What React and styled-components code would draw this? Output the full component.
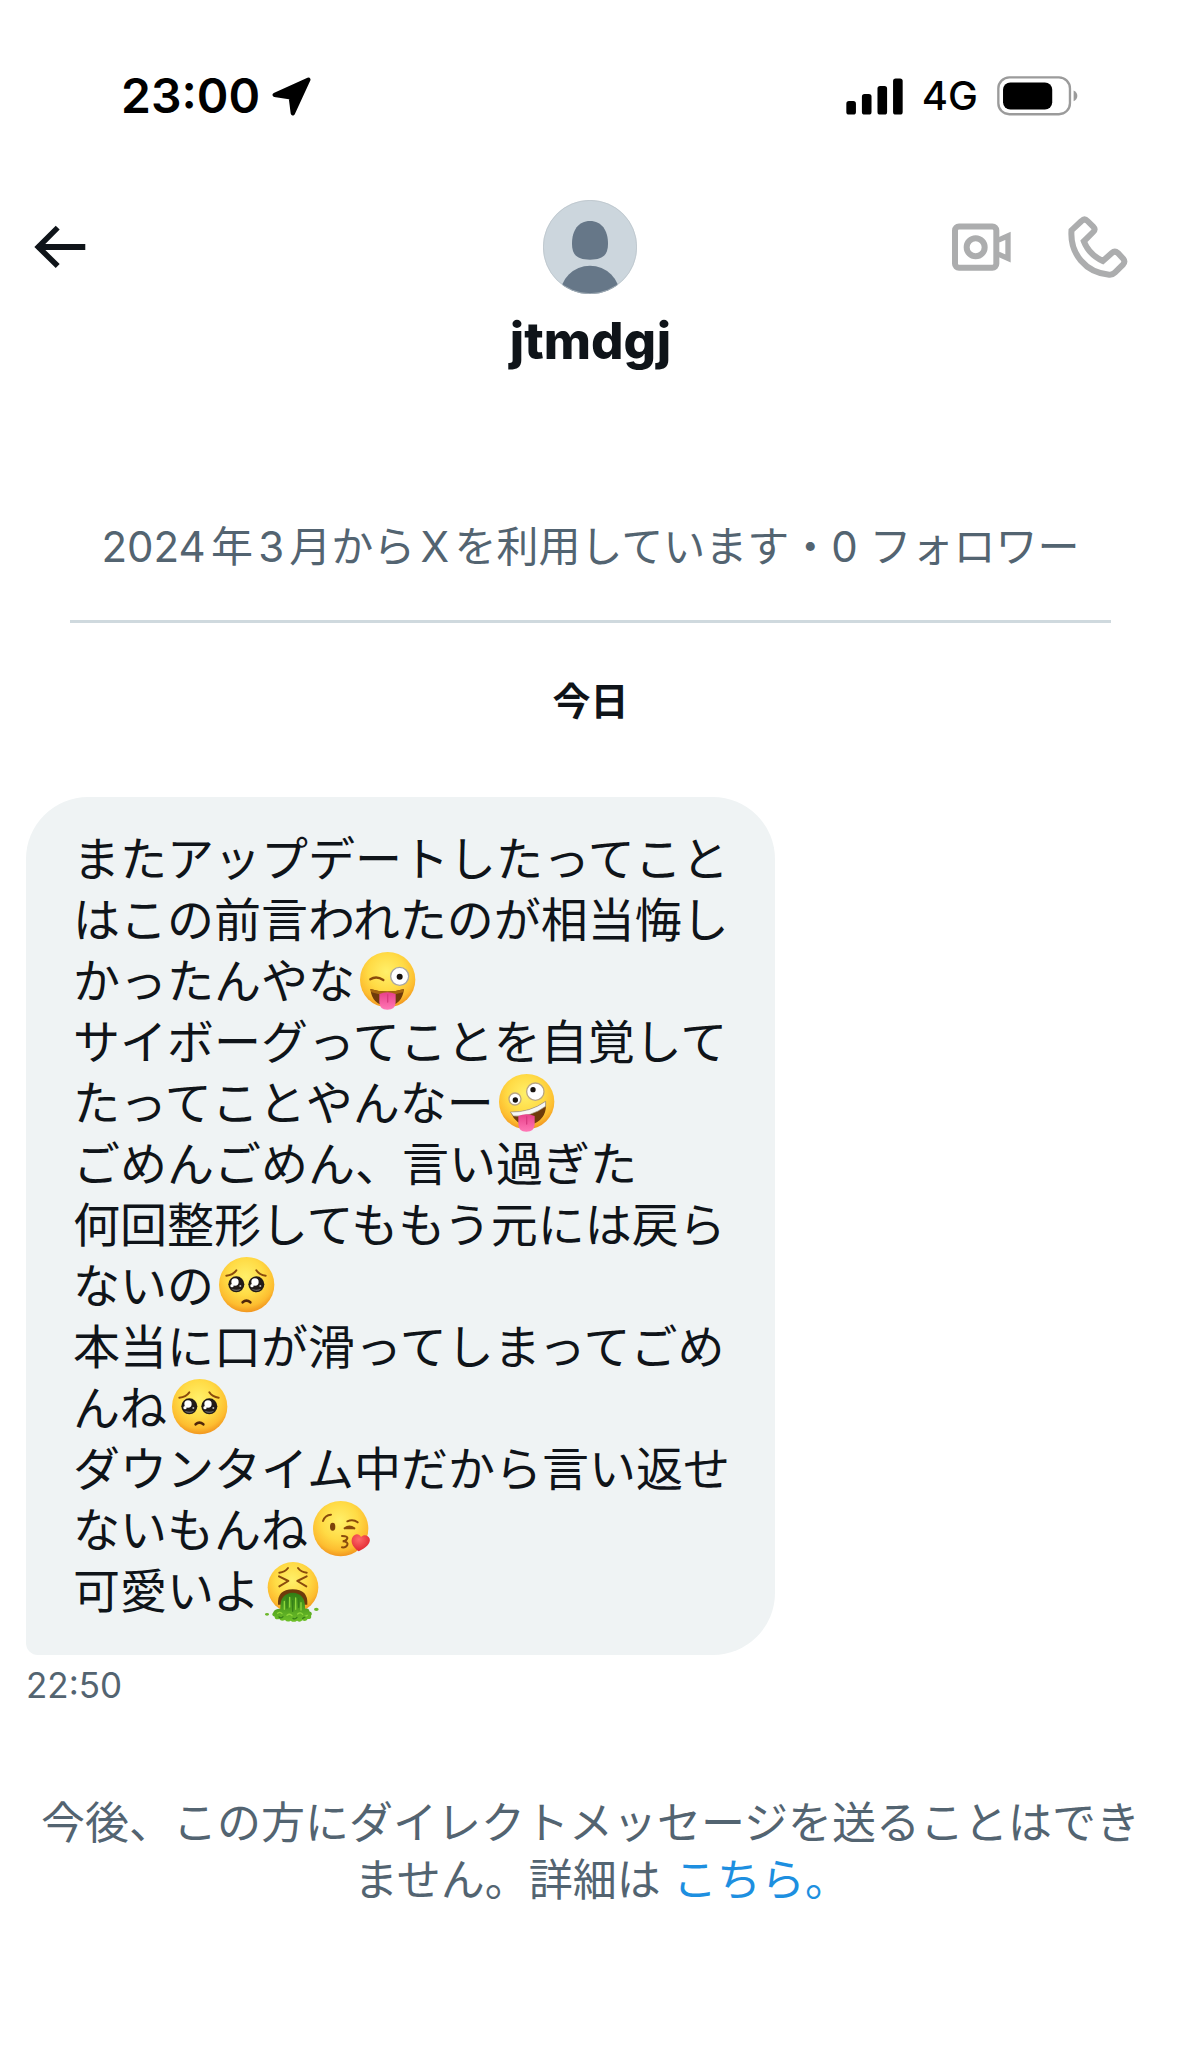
import React from 'react';
import styled, { createGlobalStyle } from 'styled-components';

const GlobalStyle = createGlobalStyle`
    * {
        box-sizing: border-box;
    }

    body {
        margin: 0;
        background-color: #FFF;
        color: #0f1419;
        font-family: Inter, "Noto Sans CJK JP", sans-serif;
    }
`;

const Screen = styled.div`
    display: flex;
    flex-direction: column;
    padding-bottom: 120px;
`;

const StatusBar = styled.div`
    display: flex;
    justify-content: space-between;
    align-items: center;
    padding: 66px 103px 0 121px;
    color: #000;
`;

const StatusGroup = styled.div`
    display: flex;
    align-items: center;
    gap: ${props => props.$gap}px;
`;

const Clock = styled.time`
    font-size: 48px;
    font-weight: 600;
    line-height: 60px;
`;

const Network = styled.span`
    font-size: 40px;
    font-weight: 500;
    line-height: 60px;
`;

const StyledHeader = styled.header`
    display: grid;
    grid-template-columns: 1fr auto 1fr;
    padding: 74px 34px 0;
`;

const HeaderSide = styled.div`
    display: flex;
    align-items: center;
    gap: 57px;
    height: 94px;
`;

const HeaderActions = styled(HeaderSide)`
    justify-content: flex-end;
    padding-right: 19px;
`;

const IconButton = styled.button`
    display: flex;
    padding: 0;
    border: 0;
    background: none;
    color: ${props => props.$muted ? '#acadae' : '#0f1419'};
`;

const Profile = styled.div`
    display: flex;
    flex-direction: column;
    align-items: center;
    gap: 17px;
`;

const Name = styled.h1`
    margin: 0;
    font-size: 51px;
    font-weight: 800;
    line-height: 60px;
`;

const AccountInfo = styled.p`
    margin: 146px 70px 0;
    padding-bottom: 43px;
    border-bottom: 3px solid #cfd9de;
    color: #536471;
    font-size: 42px;
    line-height: 60px;
    text-align: center;
    text-autospace: normal;
`;

const DayLabel = styled.h2`
    margin: 48px 0 66px;
    font-size: 38px;
    font-weight: 700;
    line-height: 60px;
    text-align: center;
`;

const Conversation = styled.main`
    display: flex;
    flex-direction: column;
    align-items: flex-start;
    padding: 0 26px;
`;

const Bubble = styled.p`
    max-width: calc(14em + 91px);
    margin: 0;
    padding: 31px 44px 34px 47px;
    border-radius: 62px 62px 62px 12px;
    background-color: #eff3f4;
    font-size: 47px;
    line-height: 61px;
    white-space: pre-line;
`;

const SentAt = styled.time`
    margin-top: 10px;
    color: #536471;
    font-size: 35px;
    line-height: 40px;
`;

const Notice = styled.footer`
    margin-top: 90px;
    padding: 0 36px;
    color: #536471;
    font-size: 44px;
    line-height: 57px;
    text-align: center;
`;

// the blank half of the closing 。 hangs outside the centred line
const NoticeLink = styled.a`
    display: inline-block;
    margin-right: -0.5em;
    color: #1d8fe0;
    text-decoration: none;
`;

const StyledEmoji = styled.svg`
    width: 58px;
    height: 60px;
    margin: -8px 0 -2px 5px;
    vertical-align: middle;
`;

const StyledDefs = styled.svg`
    position: absolute;
    width: 0;
    height: 0;
`;

const Emoji = ({ label, r = 83, cx = 83, cy = 83, children }) => (
    <StyledEmoji viewBox="0 0 174 180" role="img" aria-label={label}>
        <circle cx={cx} cy={cy} r={r} fill="url(#face)" />
        {children}
    </StyledEmoji>
);

// gradients shared by all the faces
const EmojiDefs = () => (
    <StyledDefs aria-hidden="true">
        <defs>
            <radialGradient id="face" cx="0.48" cy="0.36" r="0.66">
                <stop offset="0" stopColor="#fff06a" />
                <stop offset="0.5" stopColor="#ffdb45" />
                <stop offset="0.8" stopColor="#fdbd30" />
                <stop offset="1" stopColor="#ef8f1c" />
            </radialGradient>
            <linearGradient id="tongue" x1="0" y1="0" x2="0" y2="1">
                <stop offset="0" stopColor="#e8408a" />
                <stop offset="1" stopColor="#ff78b6" />
            </linearGradient>
            <linearGradient id="vomit" x1="0" y1="0" x2="0" y2="1">
                <stop offset="0" stopColor="#2f7d14" />
                <stop offset="1" stopColor="#6fc12a" />
            </linearGradient>
            <radialGradient id="heart" cx="0.4" cy="0.3" r="0.7">
                <stop offset="0" stopColor="#ff6a6a" />
                <stop offset="1" stopColor="#e0252f" />
            </radialGradient>
        </defs>
    </StyledDefs>
);

const Tongue = () => (
    <g>
        <path d="M58 126 Q82 116 107 126 V150 Q107 173 82 173 Q58 173 58 150 Z" fill="url(#tongue)" />
        <path d="M83 128 V150" stroke="#d93a80" strokeWidth="4" strokeLinecap="round" />
    </g>
);

const WinkTongue = () => (
    <Emoji label="😜">
        <path d="M31 82 Q49 70 70 84" fill="none" stroke="#8a4b0c" strokeWidth="7" strokeLinecap="round" />
        <circle cx="119" cy="73" r="27" fill="#fff" stroke="#a9a6a2" strokeWidth="4" />
        <circle cx="119" cy="74" r="9" fill="#181310" />
        <path d="M31 111 Q82 126 132 111 Q126 161 82 161 Q37 161 31 111 Z" fill="#6f3b0b" />
        <path d="M31 111 Q82 126 132 111 L129 121 Q82 136 34 121 Z" fill="#a5650f" />
        <Tongue />
    </Emoji>
);

const ZanyFace = () => (
    <Emoji label="🤪">
        <circle cx="48" cy="75" r="18" fill="#fff" stroke="#b9a583" strokeWidth="4" />
        <circle cx="49" cy="78" r="8" fill="#181310" />
        <circle cx="109" cy="53" r="26" fill="#fff" stroke="#b9a583" strokeWidth="4" />
        <circle cx="102" cy="47" r="8" fill="#181310" />
        <path d="M34 114 Q92 116 140 82 Q146 129 108 148 Q58 167 34 114 Z" fill="#6f3b0b" />
        <path d="M34 114 Q92 116 140 82 L140 97 Q95 130 43 126 Z" fill="#f7f7f5" stroke="#9c927f" strokeWidth="2" />
        <Tongue />
    </Emoji>
);

const PleadingFace = () => (
    <Emoji label="🥺">
        <g fill="none" stroke="#8a4b0c" strokeWidth="6" strokeLinecap="round">
            <path d="M22 56 Q42 54 52 40" />
            <path d="M112 40 Q121 54 140 56" />
            <path d="M71 136 Q82 126 94 136" stroke="#51270a" strokeWidth="8" />
        </g>
        {[52, 112].map(x => (
            <g key={x}>
                <circle cx={x} cy="82" r="24" fill="#211a18" />
                <path d={`M${x - 15} 95 Q${x} 108 ${x + 15} 95 Q${x} 101 ${x - 15} 95`} fill="#77787b" />
                <circle cx={x - 4} cy="75" r="11" fill="#fff" />
                <circle cx={x - 13} cy="86" r="5" fill="#fff" />
                <circle cx={x + 12} cy="87" r="3" fill="#b7b7b7" />
            </g>
        ))}
    </Emoji>
);

const KissFace = () => (
    <Emoji label="😘">
        <ellipse cx="59" cy="77" rx="8" ry="12" fill="#7b430b" />
        <g fill="none" stroke="#8a4b0c" strokeWidth="6" strokeLinecap="round">
            <path d="M30 60 Q36 42 54 41" />
            <path d="M103 61 Q120 53 134 64" />
            <path d="M95 82 Q109 71 124 82 M97 82 H120" />
            <path d="M87 105 Q107 105 102 114 Q98 121 89 121 Q107 122 103 132 Q98 141 87 139" />
        </g>
        <path
            d="M137 151 C116 136 112 120 119 108 C127 96 139 98 144 108 C153 99 166 103 170 113 C174 128 157 141 137 151 Z"
            fill="url(#heart)"
        />
    </Emoji>
);

const VomitFace = () => (
    <Emoji label="🤮" cx={84} cy={76} r={76}>
        <g fill="none" stroke="#8a4b0c" strokeWidth="6" strokeLinecap="round" strokeLinejoin="round">
            <path d="M43 32 Q60 30 69 18" />
            <path d="M99 18 Q108 30 125 32" />
            <path d="M42 43 L70 57 L43 73" />
            <path d="M125 43 L97 57 L124 73" />
        </g>
        <path d="M39 128 Q36 82 83 82 Q130 82 127 128 Z" fill="#6f3b0b" />
        <path
            d="M46 140 Q44 94 83 92 Q122 94 120 140 Q133 138 133 148 Q145 152 138 161 Q141 172 128 171 Q123 180 112 175 Q105 183 96 176 Q86 183 77 176 Q67 182 60 174 Q48 180 43 171 Q29 175 29 164 Q17 160 25 151 Q28 140 46 140 Z"
            fill="url(#vomit)"
        />
        <g fill="none" stroke="#8fd63c" strokeWidth="4" strokeLinecap="round">
            <path d="M58 118 V142 M74 106 V135 M92 108 V142 M108 122 V144" />
            <path d="M38 154 Q45 148 51 155 M66 160 Q74 153 81 161 M98 156 Q106 149 113 157 M120 163 L127 160" />
        </g>
        <g fill="none" stroke="#367f18" strokeWidth="4" strokeLinecap="round">
            <path d="M66 108 V138 M83 116 V148 M101 110 V136" />
            <path d="M42 165 Q48 171 54 164 M84 169 Q91 173 96 166 M113 169 L120 165" />
        </g>
        <ellipse cx="6" cy="157" rx="6" ry="4" fill="#6db82c" />
        <ellipse cx="154" cy="142" rx="7" ry="5" fill="#6db82c" />
    </Emoji>
);

const LocationIcon = () => (
    <svg width="39" height="39" viewBox="513 50 118 118" aria-hidden="true">
        <path d="M521 104 L623 58 L576 160 L570 112 Z" fill="#000" stroke="#000" strokeWidth="13" strokeLinejoin="round" />
    </svg>
);

const SignalIcon = () => (
    <svg width="57" height="37" viewBox="82 51 172 111" aria-hidden="true">
        <rect x="83" y="120" width="29" height="41" rx="8" />
        <rect x="130" y="99" width="29" height="62" rx="8" />
        <rect x="177" y="75" width="29" height="86" rx="8" />
        <rect x="224" y="52" width="29" height="109" rx="8" />
    </svg>
);

const BatteryIcon = () => (
    <svg width="81" height="40" viewBox="532 47 242 119" aria-hidden="true">
        <rect x="536" y="51" width="214" height="110" rx="33" fill="none" stroke="#9b9b9b" strokeWidth="7" />
        <rect x="550" y="66" width="147" height="81" rx="22" />
        <path d="M761 90 Q772 96 772 106 Q772 117 761 122 Z" fill="#9b9b9b" />
    </svg>
);

const BackIcon = () => (
    <svg width="52" height="44" viewBox="102 74 156 134" aria-hidden="true">
        <path d="M112 141 H257" stroke="currentColor" strokeWidth="18" />
        <path d="M173 82 L114 141 L173 199" fill="none" stroke="currentColor" strokeWidth="17" />
    </svg>
);

const VideoIcon = () => (
    <svg width="59" height="48" viewBox="97 98 177 143" aria-hidden="true">
        <g fill="none" stroke="currentColor" strokeWidth="18">
            <rect x="106" y="108" width="124" height="124" rx="12" />
            <circle cx="168" cy="170" r="27" />
            <path d="M236 149 L265 136 V204 L236 191" strokeWidth="16" />
        </g>
    </svg>
);

const PhoneIcon = () => (
    <svg width="60" height="62" viewBox="448 73 179 186" aria-hidden="true">
        <path
            d="M458 116 L488 88 Q497 79 506 88 L523 105 Q531 113 523 121 L495 149 Q511 189 552 208 L579 184 Q588 176 597 184 L613 201 Q620 210 613 218 L588 243 Q581 250 571 249 C500 243 453 186 458 116 Z"
            fill="none"
            stroke="currentColor"
            strokeWidth="18"
        />
    </svg>
);

const Avatar = () => (
    <svg width="94" height="94" viewBox="162 59 282 282" role="img" aria-label="jtmdgj">
        <clipPath id="avatar">
            <circle cx="303" cy="200" r="141" />
        </clipPath>
        <g clipPath="url(#avatar)">
            <rect x="162" y="59" width="282" height="282" fill="#ccd6dd" />
            <path d="M303 122 C338 122 357 150 357 190 C357 225 340 238 303 238 C266 238 249 225 249 190 C249 150 268 122 303 122 Z" fill="#667788" />
            <circle cx="303" cy="346" r="90" fill="#667788" />
        </g>
        <circle cx="303" cy="200" r="140" fill="none" stroke="#b9c3c9" strokeWidth="2" />
    </svg>
);

const App = () => {
    return (
        <Screen>
            <GlobalStyle />
            <EmojiDefs />
            <StatusBar>
                <StatusGroup $gap={12}>
                    <Clock>23:00</Clock>
                    <LocationIcon />
                </StatusGroup>
                <StatusGroup $gap={19}>
                    <SignalIcon />
                    <Network>4G</Network>
                    <BatteryIcon />
                </StatusGroup>
            </StatusBar>

            <StyledHeader>
                <HeaderSide>
                    <IconButton type="button" aria-label="戻る"><BackIcon /></IconButton>
                </HeaderSide>
                <Profile>
                    <Avatar />
                    <Name>jtmdgj</Name>
                </Profile>
                <HeaderActions>
                    <IconButton type="button" aria-label="ビデオ通話" $muted><VideoIcon /></IconButton>
                    <IconButton type="button" aria-label="音声通話" $muted><PhoneIcon /></IconButton>
                </HeaderActions>
            </StyledHeader>

            <AccountInfo>2024年3月からXを利用しています・0 フォロワー</AccountInfo>
            <DayLabel>今日</DayLabel>

            <Conversation>
                <Bubble>
                    またアップデートしたってことはこの前言われたのが相当悔しかったんやな<WinkTongue />{'\n'}
                    サイボーグってことを自覚してたってことやんなー<ZanyFace />{'\n'}
                    ごめんごめん、言い過ぎた{'\n'}
                    何回整形してももう元には戻らないの<PleadingFace />{'\n'}
                    本当に口が滑ってしまってごめんね<PleadingFace />{'\n'}
                    ダウンタイム中だから言い返せないもんね<KissFace />{'\n'}
                    可愛いよ<VomitFace />
                </Bubble>
                <SentAt>22:50</SentAt>
            </Conversation>

            <Notice>
                今後、この方にダイレクトメッセージを送ることはできません。詳細は <NoticeLink href="#">こちら。</NoticeLink>
            </Notice>
        </Screen>
    );
};

export default App;
